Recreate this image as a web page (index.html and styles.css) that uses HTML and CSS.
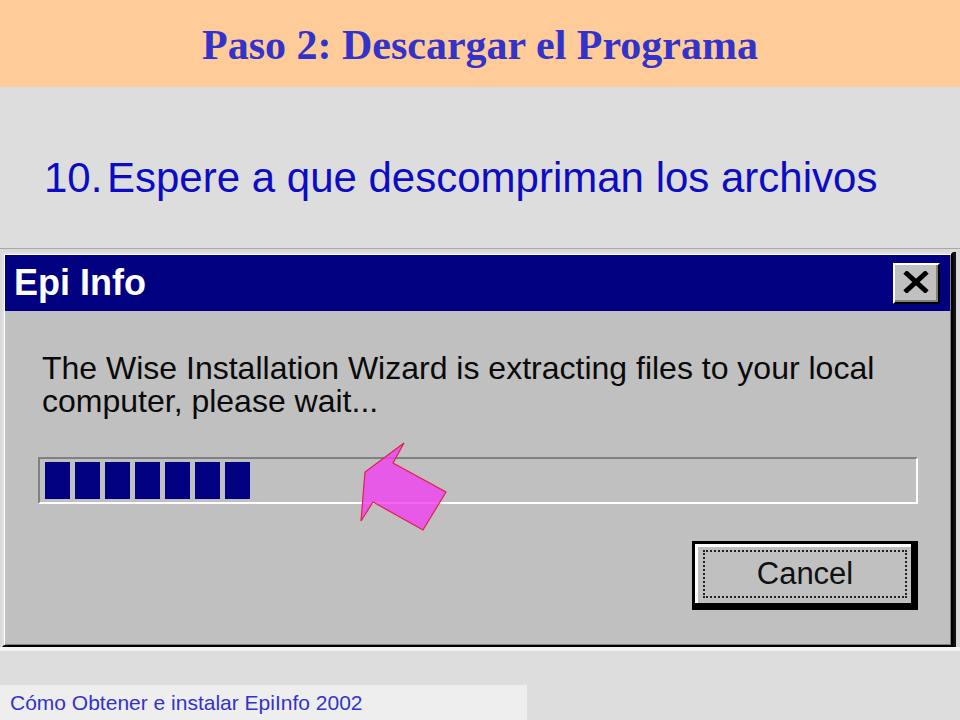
FILE: index.html
```html
<!DOCTYPE html>
<html lang="es">
<head>
  <meta charset="UTF-8" />
  <title>Paso 2: Descargar el Programa</title>
  <link rel="stylesheet" href="styles.css">
</head>

<body>
  <div class="slide">
    <div class="slide-header">
      <h1 class="slide-title">Paso 2: Descargar el Programa</h1>
    </div>

    <div class="slide-body">
      <p class="step"><span class="step-num">10.</span>Espere a que descompriman los archivos</p>

      <!-- screenshot of the installer dialog -->
      <div class="shot">
        <div class="dialog">
          <div class="titlebar">
            <span class="titlebar-text">Epi Info</span>
            <button class="close-button">
              <svg width="26" height="22" viewBox="0 0 26 22">
                <path d="M2 1 L24 21 M24 1 L2 21" stroke="#000" stroke-width="5" fill="none" />
              </svg>
            </button>
          </div>

          <div class="dialog-body">
            <p class="dialog-message">The Wise Installation Wizard is extracting files to your local<br>computer, please wait...</p>

            <div class="progress">
              <div class="progress-block"></div>
              <div class="progress-block"></div>
              <div class="progress-block"></div>
              <div class="progress-block"></div>
              <div class="progress-block"></div>
              <div class="progress-block"></div>
              <div class="progress-block"></div>
            </div>

            <div class="dialog-actions">
              <button class="cancel-button"><span class="cancel-focus">Cancel</span></button>
            </div>
          </div>
        </div>
        <div class="shot-edge"></div>

        <svg class="pointer-arrow" width="96" height="96" viewBox="0 0 96 96">
          <polygon points="49,5 10,34 6,83 18,64 68,92 91,54 38,25" fill="#f040f0" fill-opacity="0.8" stroke="#e0204a" stroke-width="1.2" />
        </svg>
      </div>

      <div class="slide-footer">Cómo Obtener e instalar EpiInfo 2002</div>
    </div>
  </div>
</body>
</html>
```

FILE: styles.css
```css
* {
  margin: 0;
  padding: 0;
  box-sizing: border-box;
}

body {
  background-color: #dddddd;
  font-family: 'Liberation Sans', Arial, sans-serif;
}

.slide {
  width: 960px;
  height: 720px;
  display: flex;
  flex-direction: column;
}

.slide-header {
  height: 87px;
  background-color: #ffcc99;
  display: flex;
  justify-content: center;
  align-items: center;
  padding-top: 2px;
}

.slide-title {
  font-family: 'Liberation Serif', 'Times New Roman', serif;
  font-size: 42px;
  font-weight: bold;
  color: #3333cc;
}

.slide-body {
  flex: 1;
  display: flex;
  flex-direction: column;
}

.step {
  height: 161px;
  padding: 70px 0 0 44px;
  font-size: 42px;
  line-height: 1;
  color: #0c0cc4;
}

.step-num {
  display: inline-block;
  width: 63px;
}

/* screenshot */
.shot {
  position: relative;
  height: 403px;
  background-color: #d9d9d9;
  border-top: 1px solid #a8a8a8;
  border-bottom: 4px solid #f4f4f4;
  padding: 3px 4px 0 2px;
  display: flex;
  align-items: flex-start;
}

.shot-edge {
  width: 3px;
  align-self: stretch;
  background-color: #111;
}

.dialog {
  flex: 1;
  background-color: #c0c0c0;
  border: 2px solid;
  border-color: #e0e0e0 #000 #000 #e0e0e0;
  box-shadow: inset 1px 1px #fff, inset -1px -1px #808080;
  padding: 1px;
}

.titlebar {
  height: 56px;
  background-color: #000080;
  display: flex;
  align-items: center;
  justify-content: space-between;
  padding: 0 10px 0 9px;
}

.titlebar-text {
  color: white;
  font-size: 36px;
  font-weight: bold;
}

.close-button {
  width: 47px;
  height: 41px;
  background-color: #c0c0c0;
  border: 2px solid;
  border-color: #fff #000 #000 #fff;
  box-shadow: inset -2px -2px #808080;
  display: flex;
  justify-content: center;
  align-items: center;
  padding: 0 2px 2px 0;
}

.dialog-body {
  padding: 41px 0 34px 33px;
}

.dialog-message {
  padding-left: 4px;
  font-size: 32px;
  line-height: 33px;
  color: #0a0a0a;
}

.progress {
  margin-top: 39px;
  width: 880px;
  height: 47px;
  border: 2px solid;
  border-color: #808080 #fff #fff #808080;
  padding: 3px 3px 3px 5px;
  display: flex;
  gap: 5px;
}

.progress-block {
  width: 25px;
  background-color: #000080;
}

.dialog-actions {
  margin-top: 37px;
  width: 880px;
  display: flex;
  justify-content: flex-end;
}

.cancel-button {
  width: 226px;
  height: 69px;
  background-color: #c0c0c0;
  border: 3px solid #000;
  border-right-width: 7px;
  border-bottom-width: 7px;
  box-shadow: inset 3px 3px #fff;
  display: flex;
  font-family: 'Liberation Sans', Arial, sans-serif;
  font-size: 31px;
  color: #111;
}

.cancel-focus {
  flex: 1;
  margin: 6px 4px 5px 8px;
  border: 2px dotted #222;
  display: flex;
  justify-content: center;
  align-items: center;
}

.pointer-arrow {
  position: absolute;
  left: 355px;
  top: 189px;
}

.slide-footer {
  margin-top: 34px;
  width: 527px;
  height: 35px;
  background-color: #eeeeee;
  color: #3333cc;
  font-size: 21px;
  padding: 6px 0 0 10px;
}
```
